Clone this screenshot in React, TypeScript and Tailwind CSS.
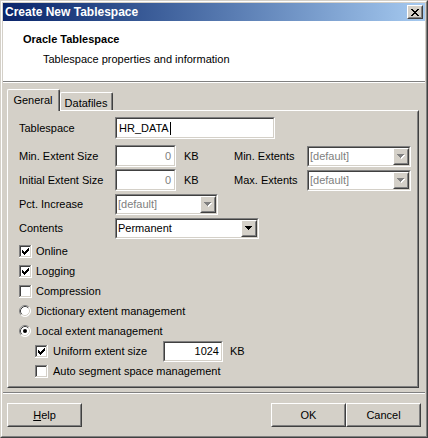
import React from "react";

const CHECK = [
  "......#",
  ".....##",
  "#...###",
  "##.###.",
  "#####..",
  ".###...",
  "..#....",
];

const CROSS = [
  "##....##",
  ".##..##.",
  "..####..",
  "...##...",
  "..####..",
  ".##..##.",
  "##....##",
];

function Pixels({ rows, color, x = 0, y = 0 }: { rows: string[]; color: string; x?: number; y?: number }) {
  return (
    <>
      {rows.flatMap((r, j) =>
        r.split("").map((c, i) =>
          c === "#" ? <rect key={`${i}-${j}`} x={x + i} y={y + j} width={1} height={1} fill={color} /> : null
        )
      )}
    </>
  );
}

function Sunken({ className = "", children }: { className?: string; children?: React.ReactNode }) {
  return (
    <div className={`border border-t-[#808080] border-l-[#808080] border-b-white border-r-white ${className}`}>
      <div className="flex h-full w-full items-center border border-t-[#404040] border-l-[#404040] border-b-[#d4d0c8] border-r-[#d4d0c8] bg-white">
        {children}
      </div>
    </div>
  );
}

function Raised({ className = "", children }: { className?: string; children?: React.ReactNode }) {
  return (
    <div className={`border border-t-white border-l-white border-b-[#404040] border-r-[#404040] bg-[#d4d0c8] ${className}`}>
      <div className="flex h-full w-full items-center justify-center border border-t-[#d4d0c8] border-l-[#d4d0c8] border-b-[#808080] border-r-[#808080]">
        {children}
      </div>
    </div>
  );
}

function Arrow({ disabled }: { disabled?: boolean }) {
  const d = "M0 0H7V1H6V2H5V3H4V4H3V3H2V2H1V1H0Z";
  return (
    <svg width="8" height="5" viewBox="0 0 8 5" shapeRendering="crispEdges">
      {disabled ? (
        <>
          <path d={d} fill="#ffffff" transform="translate(1 1)" />
          <path d={d} fill="#808080" />
        </>
      ) : (
        <path d={d} fill="#000000" />
      )}
    </svg>
  );
}

function Combo({ className, value, disabled }: { className: string; value: string; disabled?: boolean }) {
  return (
    <Sunken className={className}>
      <span className={`flex-1 pl-[1px] ${disabled ? "text-[#808080]" : ""}`}>{value}</span>
      <Raised className="h-full w-[16px]">
        <Arrow disabled={disabled} />
      </Raised>
    </Sunken>
  );
}

function CheckBox({ checked }: { checked?: boolean }) {
  return (
    <svg width="13" height="13" viewBox="0 0 13 13" shapeRendering="crispEdges" className="shrink-0">
      <rect x="0" y="0" width="13" height="13" fill="#ffffff" />
      <rect x="0" y="0" width="12" height="1" fill="#808080" />
      <rect x="0" y="0" width="1" height="12" fill="#808080" />
      <rect x="1" y="1" width="10" height="1" fill="#404040" />
      <rect x="1" y="1" width="1" height="10" fill="#404040" />
      <rect x="1" y="11" width="11" height="1" fill="#d4d0c8" />
      <rect x="11" y="1" width="1" height="11" fill="#d4d0c8" />
      {checked ? <Pixels rows={CHECK} color="#000000" x={3} y={3} /> : null}
    </svg>
  );
}

function Radio({ checked }: { checked?: boolean }) {
  return (
    <svg width="12" height="12" viewBox="0 0 12 12" className="shrink-0">
      <circle cx="6" cy="6" r="5.5" fill="#ffffff" />
      <path d="M2.11 9.89 A5.5 5.5 0 0 1 9.89 2.11" stroke="#808080" strokeWidth="1" fill="none" />
      <path d="M9.89 2.11 A5.5 5.5 0 0 1 2.11 9.89" stroke="#ffffff" strokeWidth="1" fill="none" />
      <path d="M2.82 9.18 A4.5 4.5 0 0 1 9.18 2.82" stroke="#404040" strokeWidth="1" fill="none" />
      <path d="M9.18 2.82 A4.5 4.5 0 0 1 2.82 9.18" stroke="#d4d0c8" strokeWidth="1" fill="none" />
      {checked ? <circle cx="6" cy="6" r="2" fill="#000000" /> : null}
    </svg>
  );
}

export default function App() {
  return (
    <div className="h-[438px] w-[428px] border border-t-[#d4d0c8] border-l-[#d4d0c8] border-b-[#404040] border-r-[#404040] font-['Liberation_Sans',Arial,sans-serif] text-[11px] leading-[13px] text-black">
      <div className="flex h-full w-full flex-col border border-t-white border-l-white border-b-[#808080] border-r-[#808080] bg-[#d4d0c8] p-px">
        {/* title bar */}
        <div className="flex h-[18px] shrink-0 items-center justify-between bg-linear-to-r from-[#0a246a] to-[#a6caf0] px-[2px]">
          <span className="text-[12px] font-bold text-white">Create New Tablespace</span>
          <Raised className="h-[14px] w-[16px]">
            <svg width="8" height="7" viewBox="0 0 8 7" shapeRendering="crispEdges">
              <Pixels rows={CROSS} color="#000000" />
            </svg>
          </Raised>
        </div>

        {/* header */}
        <div className="h-[60px] shrink-0 bg-white pl-[20px] pt-[12px]">
          <div className="font-bold">Oracle Tablespace</div>
          <div className="ml-[20px] mt-[7px]">Tablespace properties and information</div>
        </div>
        <div className="h-px shrink-0 bg-[#808080]" />
        <div className="h-px shrink-0 bg-white" />

        {/* body */}
        <div className="flex flex-1 flex-col pt-[6px]">
          <div className="ml-[4px] flex h-[21px] items-end">
            <div className="relative z-10 -mb-px h-[22px] w-[53px] rounded-t-[2px] border-l border-t border-r border-l-white border-t-white border-r-[#404040] bg-[#d4d0c8]">
              <div className="flex h-full items-start justify-center border-r border-r-[#808080] pt-[4px]">General</div>
            </div>
            <div className="h-[18px] w-[53px] rounded-t-[2px] border-l border-t border-r border-l-white border-t-white border-r-[#404040]">
              <div className="flex h-full items-start justify-center border-r border-r-[#808080] pt-[4px]">Datafiles</div>
            </div>
          </div>

          <div className="ml-[4px] h-[278px] w-[412px] border border-t-white border-l-white border-b-[#404040] border-r-[#404040]">
            <div className="h-full w-full border border-t-[#d4d0c8] border-l-[#d4d0c8] border-b-[#808080] border-r-[#808080] pl-[10px] pt-[4px]">
              <div className="flex h-[24px] items-center">
                <span className="w-[96px]">Tablespace</span>
                <Sunken className="h-[22px] w-[160px]">
                  <span className="pl-[2px]">HR_DATA</span>
                  <span className="ml-px h-[13px] w-px bg-black" />
                </Sunken>
              </div>

              <div className="mt-[4px] flex h-[24px] items-center">
                <span className="w-[96px]">Min. Extent Size</span>
                <Sunken className="h-[22px] w-[61px]">
                  <span className="flex-1 pr-[3px] text-right text-[#808080]">0</span>
                </Sunken>
                <span className="ml-[8px] w-[50px]">KB</span>
                <span className="w-[73px]">Min. Extents</span>
                <Combo className="h-[21px] w-[104px]" value="[default]" disabled />
              </div>

              <div className="flex h-[24px] items-center">
                <span className="w-[96px]">Initial Extent Size</span>
                <Sunken className="h-[22px] w-[61px]">
                  <span className="flex-1 pr-[3px] text-right text-[#808080]">0</span>
                </Sunken>
                <span className="ml-[8px] w-[50px]">KB</span>
                <span className="w-[73px]">Max. Extents</span>
                <Combo className="h-[21px] w-[104px]" value="[default]" disabled />
              </div>

              <div className="flex h-[24px] items-center">
                <span className="w-[96px]">Pct. Increase</span>
                <Combo className="h-[21px] w-[103px]" value="[default]" disabled />
              </div>

              <div className="flex h-[24px] items-center">
                <span className="w-[96px]">Contents</span>
                <Combo className="h-[21px] w-[144px]" value="Permanent" />
              </div>

              <div className="mt-px flex flex-col">
                <div className="flex h-[20px] items-center gap-[4px]">
                  <CheckBox checked />
                  <span>Online</span>
                </div>
                <div className="flex h-[20px] items-center gap-[4px]">
                  <CheckBox checked />
                  <span>Logging</span>
                </div>
                <div className="flex h-[20px] items-center gap-[4px]">
                  <CheckBox />
                  <span>Compression</span>
                </div>
                <div className="flex h-[20px] items-center gap-[5px]">
                  <Radio />
                  <span>Dictionary extent management</span>
                </div>
                <div className="flex h-[20px] items-center gap-[5px]">
                  <Radio checked />
                  <span>Local extent management</span>
                </div>
                <div className="flex h-[20px] items-center pl-[16px]">
                  <CheckBox checked />
                  <span className="ml-[5px] w-[110px]">Uniform extent size</span>
                  <Sunken className="h-[21px] w-[60px]">
                    <span className="flex-1 pr-[2px] text-right">1024</span>
                  </Sunken>
                  <span className="ml-[7px]">KB</span>
                </div>
                <div className="flex h-[20px] items-center pl-[16px]">
                  <CheckBox />
                  <span className="ml-[5px]">Auto segment space management</span>
                </div>
              </div>
            </div>
          </div>

          <div className="mt-[4px] h-px bg-[#808080]" />
          <div className="h-px bg-white" />

          <div className="mt-[9px] flex items-center px-[4px]">
            <Raised className="h-[24px] w-[75px]">
              <span>
                <span className="underline">H</span>elp
              </span>
            </Raised>
            <div className="flex-1" />
            <Raised className="h-[24px] w-[75px]">OK</Raised>
            <Raised className="h-[24px] w-[75px]">Cancel</Raised>
          </div>
        </div>
      </div>
    </div>
  );
}
